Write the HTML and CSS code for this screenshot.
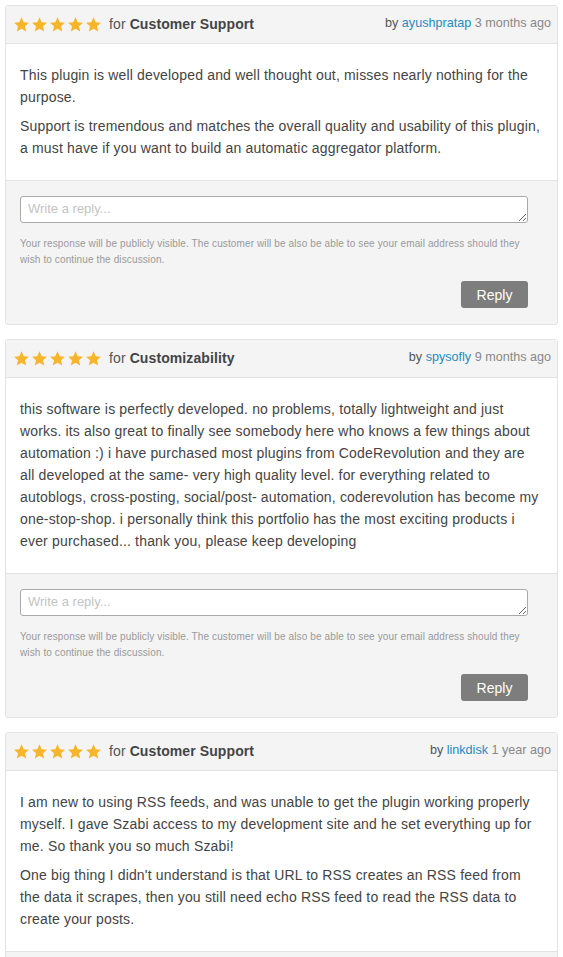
FILE: index.html
```html
<!DOCTYPE html>
<html lang="en">
<head>
    <meta charset="UTF-8">
    <meta name="viewport" content="width=device-width, initial-scale=1.0">
    <title>Reviews</title>
    <link rel="stylesheet" href="styles.css">
</head>
<body>

<svg width="0" height="0" class="defs">
    <defs>
        <symbol id="star" viewBox="0 0 24 24">
            <path d="M12 1.8l3.1 6.9 7.4.7-5.6 5 1.7 7.4L12 17.9l-6.6 3.9 1.7-7.4-5.6-5 7.4-.7z"/>
        </symbol>
    </defs>
</svg>

<div class="reviews">

    <!-- Review 1 -->
    <div class="review">
        <div class="review-header">
            <div class="rating">
                <span class="stars">
                    <svg><use href="#star"/></svg><svg><use href="#star"/></svg><svg><use href="#star"/></svg><svg><use href="#star"/></svg><svg><use href="#star"/></svg>
                </span>
                <span class="for">for <strong>Customer Support</strong></span>
            </div>
            <div class="meta">by <a href="#">ayushpratap</a> <span class="date">3 months ago</span></div>
        </div>
        <div class="review-body">
            <p>This plugin is well developed and well thought out, misses nearly nothing for the purpose.</p>
            <p>Support is tremendous and matches the overall quality and usability of this plugin, a must have if you want to build an automatic aggregator platform.</p>
        </div>
        <form class="reply">
            <textarea rows="1" placeholder="Write a reply..."></textarea>
            <p class="notice">Your response will be publicly visible. The customer will be also be able to see your email address should they wish to continue the discussion.</p>
            <div class="actions"><button type="submit">Reply</button></div>
        </form>
    </div>

    <!-- Review 2 -->
    <div class="review">
        <div class="review-header">
            <div class="rating">
                <span class="stars">
                    <svg><use href="#star"/></svg><svg><use href="#star"/></svg><svg><use href="#star"/></svg><svg><use href="#star"/></svg><svg><use href="#star"/></svg>
                </span>
                <span class="for">for <strong>Customizability</strong></span>
            </div>
            <div class="meta">by <a href="#">spysofly</a> <span class="date">9 months ago</span></div>
        </div>
        <div class="review-body">
            <p>this software is perfectly developed. no problems, totally lightweight and just works. its also great to finally see somebody here who knows a few things about automation :) i have purchased most plugins from CodeRevolution and they are all developed at the same- very high quality level. for everything related to autoblogs, cross-posting, social/post- automation, coderevolution has become my one-stop-shop. i personally think this portfolio has the most exciting products i ever purchased... thank you, please keep developing</p>
        </div>
        <form class="reply">
            <textarea rows="1" placeholder="Write a reply..."></textarea>
            <p class="notice">Your response will be publicly visible. The customer will be also be able to see your email address should they wish to continue the discussion.</p>
            <div class="actions"><button type="submit">Reply</button></div>
        </form>
    </div>

    <!-- Review 3 -->
    <div class="review">
        <div class="review-header">
            <div class="rating">
                <span class="stars">
                    <svg><use href="#star"/></svg><svg><use href="#star"/></svg><svg><use href="#star"/></svg><svg><use href="#star"/></svg><svg><use href="#star"/></svg>
                </span>
                <span class="for">for <strong>Customer Support</strong></span>
            </div>
            <div class="meta">by <a href="#">linkdisk</a> <span class="date">1 year ago</span></div>
        </div>
        <div class="review-body">
            <p>I am new to using RSS feeds, and was unable to get the plugin working properly myself. I gave Szabi access to my development site and he set everything up for me. So thank you so much Szabi!</p>
            <p>One big thing I didn't understand is that URL to RSS creates an RSS feed from the data it scrapes, then you still need echo RSS feed to read the RSS data to create your posts.</p>
        </div>
        <form class="reply">
            <textarea rows="1" placeholder="Write a reply..."></textarea>
            <p class="notice">Your response will be publicly visible. The customer will be also be able to see your email address should they wish to continue the discussion.</p>
            <div class="actions"><button type="submit">Reply</button></div>
        </form>
    </div>

</div>

</body>
</html>
```

FILE: styles.css
```css
/* General Page Styles */
body {
    font-family: 'Liberation Sans', Arial, sans-serif;
    font-size: 14px;
    color: #444;
    background: #fff;
    margin: 0;
    padding: 5px 5px 0 5px;
}

.defs {
    position: absolute;
}

.reviews {
    display: flex;
    flex-direction: column;
    gap: 14px;
}

/* Review Card */
.review {
    border: 1px solid #e1e3e6;
    border-radius: 3px;
    background: #f4f4f4;
}

.review-header {
    display: flex;
    justify-content: space-between;
    align-items: center;
    height: 37px;
    padding: 0 6px 0 7px;
    border-bottom: 1px solid #e1e3e6;
    background: #f4f4f4;
}

.rating {
    display: flex;
    align-items: center;
    margin-top: -1px;
}

.stars {
    display: flex;
    gap: 1px;
    margin-right: 7px;
}

.stars svg {
    width: 17px;
    height: 17px;
    fill: #f6b52a;
}

.for {
    color: #555;
    letter-spacing: 0.1px;
}

.for strong {
    color: #444;
}

.meta {
    color: #555;
    font-size: 12.6px;
    margin-top: -3px;
}

.meta a {
    color: #1e8cbe;
    text-decoration: none;
}

.meta .date {
    color: #888;
}

/* Review Body */
.review-body {
    background: #fff;
    padding: 20px 15px 21px 14px;
    border-bottom: 1px solid #e1e3e6;
    line-height: 22px;
    letter-spacing: 0.17px;
}

.review-body p {
    margin: 0 0 7px;
}

.review-body p:last-child {
    margin-bottom: 0;
}

/* Reply Form */
.reply {
    padding: 15px 29px 16px 14px;
}

.reply textarea {
    display: block;
    box-sizing: border-box;
    width: 100%;
    height: 27px;
    padding: 4px 7px;
    font-family: 'Liberation Sans', Arial, sans-serif;
    font-size: 13px;
    border: 1px solid #aaa;
    border-radius: 3px;
    background: #fff;
    resize: vertical;
}

.reply textarea::placeholder {
    color: #c4c4c4;
}

.reply .notice {
    margin: 13px 0 0;
    font-size: 10px;
    line-height: 16px;
    letter-spacing: 0.12px;
    color: #999;
}

.actions {
    display: flex;
    justify-content: flex-end;
    margin-top: 13px;
}

.actions button {
    width: 67px;
    height: 27px;
    font-family: 'Liberation Sans', Arial, sans-serif;
    font-size: 14px;
    color: #fff;
    background: #7d7d7d;
    border: none;
    border-radius: 3px;
    cursor: pointer;
}
```
